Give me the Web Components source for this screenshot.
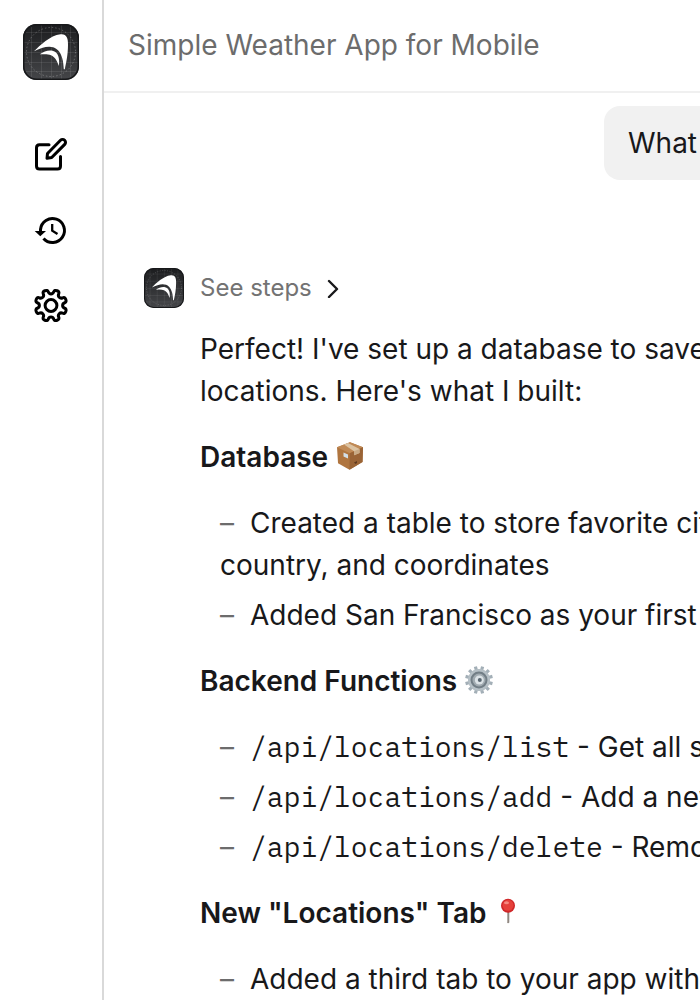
<!DOCTYPE html>
<html lang="en">
<head>
<meta charset="utf-8">
<title>Simple Weather App for Mobile</title>
<style>
  body {
    margin: 0;
    height: 1000px;
    overflow: hidden;
    background: #fff;
    color: #18181a;
    font-family: Inter, "Liberation Sans", sans-serif;
    font-size: 28px;
    line-height: 42px;
  }
</style>
</head>
<body>
<chat-app>
  <side-bar slot="side"></side-bar>
  <top-bar slot="top">Simple Weather App for Mobile</top-bar>
  <user-message>What</user-message>
  <agent-message>
    <text-block>Perfect! I've set up a database to save<br>locations. Here's what I built:</text-block>
    <text-block heavy>Database <emoji-icon name="box"></emoji-icon></text-block>
    <dash-list>
      <dash-item>Created a table to store favorite cit<br>country, and coordinates</dash-item>
      <dash-item>Added San Francisco as your first</dash-item>
    </dash-list>
    <text-block heavy>Backend Functions <emoji-icon name="gear"></emoji-icon></text-block>
    <dash-list>
      <dash-item><code-text>/api/locations/list</code-text> - Get all s</dash-item>
      <dash-item><code-text>/api/locations/add</code-text> - Add a new</dash-item>
      <dash-item><code-text>/api/locations/delete</code-text> - Remo</dash-item>
    </dash-list>
    <text-block heavy>New "Locations" Tab <emoji-icon name="pin"></emoji-icon></text-block>
    <dash-list>
      <dash-item>Added a third tab to your app with</dash-item>
    </dash-list>
  </agent-message>
</chat-app>

<script>
function define(name, html) {
  const template = document.createElement("template");
  template.innerHTML = html;
  customElements.define(name, class extends HTMLElement {
    constructor() {
      super();
      this.attachShadow({ mode: "open" }).appendChild(template.content.cloneNode(true));
    }
  });
}

define("app-logo", `
  <style>
    :host { display: block; width: var(--logo-size, 56px); height: var(--logo-size, 56px); flex: none; }
    svg { display: block; width: 100%; height: 100%; }
  </style>
  <svg viewBox="0 0 56 56" fill="none">
    <defs>
      <linearGradient id="g" x1="0" y1="0" x2="0" y2="1">
        <stop offset="0" stop-color="#1b1c1e"/>
        <stop offset="1" stop-color="#454649"/>
      </linearGradient>
    </defs>
    <rect width="56" height="56" rx="13.5" fill="url(#g)"/>
    <path d="M8.500 3V53M18.500 1V55M28.500 1V55M38.500 1V55M47.500 3V53M3 8.500H53M1 18.500H55M1 28.500H55M1 38.500H55M3 47.500H53" stroke="#fff" stroke-opacity=".09"/>
    <circle cx="28" cy="28" r="24.500" stroke="#fff" stroke-opacity=".25" stroke-dasharray="1.500 2"/>
    <rect x=".75" y=".75" width="54.500" height="54.500" rx="13" stroke="#17181a" stroke-width="1.500"/>
    <path d="M11 27.300C17 21.500 27 11.500 37.500 10.300C43.500 9.600 45.200 14 45 21C44.900 31 43.300 38 41.800 45.300H40.800C40.300 37 39.300 31 35 26.300C29.500 20.600 20.500 22.500 11 27.300Z" fill="#fff"/>
    <path d="M16.800 30.300C21 27.500 25 26 29.500 26.800C35.200 28 37 34.500 35.800 42C34 36.500 32 33.200 28 31.300C24.500 29.700 20 30.500 16.800 30.300Z" fill="#fff"/>
  </svg>`);

define("side-bar", `
  <style>
    :host {
      display: flex; flex-direction: column; align-items: center;
      box-sizing: border-box; width: 104px; height: 1000px; padding-top: 24px;
      border-right: 2px solid #d9d9d9;
    }
    nav { display: flex; flex-direction: column; gap: 39.5px; margin-top: 56px; }
    svg { display: block; width: 36px; height: 36px; fill: none; stroke: #000; stroke-width: 3; stroke-linecap: round; stroke-linejoin: round; }
    .clock { stroke-linecap: butt; stroke-linejoin: miter; }
    .hands { stroke-width: 2.3; }
  </style>
  <app-logo></app-logo>
  <nav>
    <svg viewBox="0 0 36 36">
      <path d="M16 8.700H6.500Q3.500 8.700 3.500 11.700V30Q3.500 33 6.500 33H24.500Q27.500 33 27.500 30V20.500"/>
      <path d="M14.500 17.500L27.500 4.300A2.900 2.900 0 0 1 31.700 8.400L18.700 21.500L14 22.300Z"/>
    </svg>
    <svg class="clock" viewBox="0 0 36 36">
      <path d="M7.500 20V17.500A12 12 0 1 1 10.500 26.500"/>
      <path d="M1.700 19H13L7.300 24.300Z" fill="#000" stroke="none"/>
      <path class="hands" d="M19.200 12V18.600L24.500 22"/>
    </svg>
    <svg viewBox="0 0 36 36">
      <path class="cog"/>
      <circle cx="18" cy="18.500" r="5.900"/>
    </svg>
  </nav>`);

define("top-bar", `
  <style>
    :host {
      display: block; box-sizing: border-box; height: 93px; padding: 24px 24px 0;
      border-bottom: 2px solid #f0f0f0; color: #6c6c6c; white-space: nowrap; overflow: hidden;
    }
  </style>
  <slot></slot>`);

define("chat-app", `
  <style>
    :host { display: flex; width: 700px; height: 1000px; overflow: hidden; }
    main { flex: 1; min-width: 0; overflow: hidden; }
  </style>
  <slot name="side"></slot>
  <main><slot name="top"></slot><slot></slot></main>`);

define("user-message", `
  <style>
    :host {
      display: block; box-sizing: border-box; height: 74px; margin: 13px 0 0 500px;
      padding: 16px 0 0 24px; background: #f1f1f1; border-radius: 16px 0 0 16px; white-space: nowrap;
    }
  </style>
  <slot></slot>`);

define("agent-message", `
  <style>
    :host { display: flex; gap: 16px; margin: 88px 0 0 40px; --logo-size: 40px; }
    .content { display: flex; flex-direction: column; gap: 24px; flex: 1; min-width: 0; }
    .steps {
      display: flex; align-items: center; gap: 15px; height: 40px; margin-bottom: -4px;
      color: #737373; font-size: 24px; line-height: 40px;
    }
    svg { display: block; fill: none; stroke: #18181a; stroke-width: 2.4; }
  </style>
  <app-logo></app-logo>
  <div class="content">
    <div class="steps">
      <span>See steps</span>
      <svg width="12" height="20" viewBox="0 0 12 20"><path d="M2 3L10 11L2 19" stroke-linecap="round" stroke-linejoin="round"/></svg>
    </div>
    <slot></slot>
  </div>`);

define("text-block", `
  <style>
    :host { display: block; white-space: nowrap; }
    :host([heavy]) { font-weight: 600; }
  </style>
  <slot></slot>`);

define("dash-list", `
  <style>
    :host { display: flex; flex-direction: column; gap: 8px; padding-left: 20px; }
  </style>
  <slot></slot>`);

define("dash-item", `
  <style>
    :host { display: block; white-space: nowrap; }
    span { display: inline-block; width: 30px; color: #6c6c6c; }
  </style>
  <span>–</span><slot></slot>`);

define("code-text", `
  <style>
    :host { display: inline-block; font-family: "IBM Plex Mono", "Liberation Mono", monospace; font-size: 28px; line-height: 1; }
  </style>
  <slot></slot>`);

// corner points of a toothed wheel, tooth edges given as fractions of one step
function wheelPoints(cx, cy, teeth, inner, outer) {
  const points = [];
  for (let i = 0; i < teeth; i++) {
    for (const [part, r] of [[-.28, inner], [-.22, outer], [.22, outer], [.28, inner]]) {
      const a = (i + .5 + part) * 2 * Math.PI / teeth;
      points.push([cx + r * Math.sin(a), cy - r * Math.cos(a)]);
    }
  }
  return points;
}

function wheel(...args) {
  return "M" + wheelPoints(...args).map(p => p.map(n => n.toFixed(2)).join(" ")).join("L") + "Z";
}

// same wheel, each corner rounded with a curve between side midpoints
function softWheel(...args) {
  const points = wheelPoints(...args);
  let d = "";
  points.forEach((p, i) => {
    const q = points[(i + 1) % points.length];
    const mid = ((p[0] + q[0]) / 2).toFixed(2) + " " + ((p[1] + q[1]) / 2).toFixed(2);
    if (i === 0) d = "M" + mid;
    else d += "Q" + p[0].toFixed(2) + " " + p[1].toFixed(2) + " " + mid;
    if (i === points.length - 1) d += "Q" + q[0].toFixed(2) + " " + q[1].toFixed(2) + " " + d.slice(1, d.indexOf("Q"));
  });
  return d + "Z";
}

document.querySelector("side-bar").shadowRoot.querySelector(".cog").setAttribute("d", softWheel(18, 18.5, 8, 11.8, 16.2));

const emojis = {
  box: `
    <path d="M1 5.300L14 .3L27 5.300L26.500 20L13.500 27.700L2 21.300Z" fill="#b0753f"/>
    <path d="M1 5.300L14 .3L27 5.300L13.700 11.300Z" fill="#c08a56"/>
    <path d="M13.700 11.300L27 5.300L26.500 20L13.500 27.700Z" fill="#9a6436"/>
    <path d="M8 2.600L12 1.100L23.500 6.900V11L18 13.300V9.200Z" fill="#dcc3a2"/>
    <path d="M18 9.200L23.500 6.900V11L18 13.300Z" fill="#c9ab86"/>
    <path d="M7.500 10.500L12 12.500V16.500L7.500 14.500Z" fill="#d3dfe8"/>
    <path d="M18 20.500L21 19V21L19.500 22Z" fill="#5f3a20"/>`,
  gear: `
    <path d="${wheel(14, 14, 12, 10.8, 14)}" fill="#a3afb7"/>
    <circle cx="14" cy="14" r="11" fill="#b6c0c6"/>
    <circle cx="14" cy="14" r="7.500" fill="#a1abb1" stroke="#727e86" stroke-width="2"/>
    <circle cx="14.300" cy="14" r="4.500" fill="#dce3e7"/>
    <circle cx="14.800" cy="14" r="2" fill="#596670"/>`,
  pin: `
    <path d="M12 13H14.300V24.500Q13 26 12 24.500Z" fill="#8f8781"/>
    <path d="M12.500 13V24.500" stroke="#bdb6b0" stroke-width=".8"/>
    <circle cx="13" cy="7.800" r="7" fill="#cf2729"/>
    <circle cx="13" cy="7.300" r="5.500" fill="#e6413b"/>
    <ellipse cx="11.500" cy="4.800" rx="2.500" ry="1.500" fill="#f58a80"/>`
};

customElements.define("emoji-icon", class extends HTMLElement {
  constructor() {
    super();
    this.attachShadow({ mode: "open" }).innerHTML = `
      <style>
        :host { display: inline-block; width: 28px; height: 28px; margin-left: 1px; vertical-align: -3px; line-height: 0; }
      </style>
      <svg width="28" height="28" viewBox="0 0 28 28" fill="none">${emojis[this.getAttribute("name")]}</svg>`;
  }
});
</script>
</body>
</html>
